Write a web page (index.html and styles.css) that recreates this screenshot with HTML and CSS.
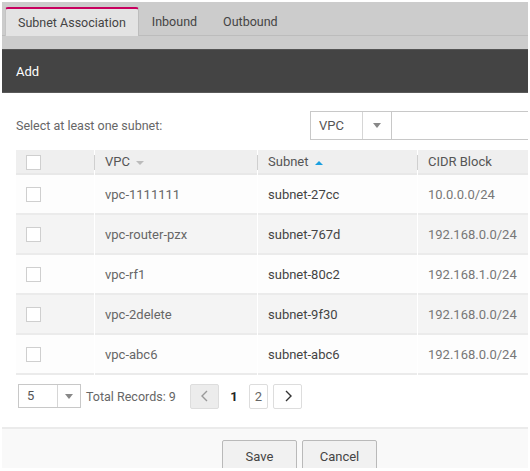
FILE: index.html
```html
<!DOCTYPE html>
<html lang="en">
<head>
    <meta charset="UTF-8">
    <title>Subnet Association</title>
    <link rel="stylesheet" href="styles.css">
</head>
<body>
    <div class="frame">
        <div class="tabbar">
            <ul class="tabs">
                <li class="tab active">Subnet Association</li>
                <li class="tab">Inbound</li>
                <li class="tab">Outbound</li>
            </ul>
        </div>
        <div class="titlebar">Add</div>

        <div class="content">
            <div class="toolbar">
                <span class="hint">Select at least one subnet:</span>
                <div class="filter">
                    <div class="select">
                        <span class="select-value">VPC</span>
                        <span class="select-arrow"><span class="caret"></span></span>
                    </div>
                    <input type="text" class="search">
                </div>
            </div>

            <table class="grid">
                <thead>
                    <tr>
                        <th class="col-check"><span class="check"></span></th>
                        <th class="col-vpc"><span class="sep"></span>VPC <span class="sort-down"></span></th>
                        <th class="col-subnet"><span class="sep"></span>Subnet <span class="sort-up"></span></th>
                        <th class="col-cidr"><span class="sep"></span>CIDR Block</th>
                    </tr>
                </thead>
                <tbody>
                    <tr>
                        <td><span class="check"></span></td>
                        <td>vpc-1111111</td>
                        <td class="sorted">subnet-27cc</td>
                        <td class="cidr">10.0.0.0/24</td>
                    </tr>
                    <tr class="alt">
                        <td><span class="check"></span></td>
                        <td>vpc-router-pzx</td>
                        <td class="sorted">subnet-767d</td>
                        <td class="cidr">192.168.0.0/24</td>
                    </tr>
                    <tr>
                        <td><span class="check"></span></td>
                        <td>vpc-rf1</td>
                        <td class="sorted">subnet-80c2</td>
                        <td class="cidr">192.168.1.0/24</td>
                    </tr>
                    <tr class="alt">
                        <td><span class="check"></span></td>
                        <td>vpc-2delete</td>
                        <td class="sorted">subnet-9f30</td>
                        <td class="cidr">192.168.0.0/24</td>
                    </tr>
                    <tr>
                        <td><span class="check"></span></td>
                        <td>vpc-abc6</td>
                        <td class="sorted">subnet-abc6</td>
                        <td class="cidr">192.168.0.0/24</td>
                    </tr>
                </tbody>
            </table>

            <div class="pager">
                <div class="select small">
                    <span class="select-value">5</span>
                    <span class="select-arrow"><span class="caret"></span></span>
                </div>
                <span class="total">Total Records: 9</span>
                <div class="pages">
                    <span class="page-btn disabled">
                        <svg width="10" height="12" viewBox="0 0 10 12"><path d="M7 1 L2 6 L7 11" fill="none" stroke="#999" stroke-width="1.4"/></svg>
                    </span>
                    <span class="page current">1</span>
                    <span class="page boxed">2</span>
                    <span class="page-btn">
                        <svg width="10" height="12" viewBox="0 0 10 12"><path d="M3 1 L8 6 L3 11" fill="none" stroke="#333" stroke-width="1.4"/></svg>
                    </span>
                </div>
            </div>
        </div>

        <div class="footer">
            <button class="btn">Save</button>
            <button class="btn">Cancel</button>
        </div>
    </div>
</body>
</html>
```

FILE: styles.css
```css
body {
    margin: 0;
    padding: 2px;
    background-color: white;
    font-family: Roboto, "Liberation Sans", sans-serif;
    font-size: 13px;
    color: #555;
}

.frame {
    width: 526px;
    height: 466px;
    overflow: hidden;
}

/* Tabs */
.tabbar {
    height: 47px;
    background-color: #cccccc;
    padding-top: 5px;
    box-sizing: border-box;
}

.tabs {
    list-style: none;
    margin: 0;
    padding: 0 0 0 3px;
    display: flex;
    height: 28px;
    border-bottom: 1px solid #bcbcbc;
    font-size: 12.5px;
}

.tab {
    padding: 0 13px;
    line-height: 29px;
    color: #444;
}

.tab.active {
    background-color: #e3e3e3;
    border-top: 2px solid #c8005f;
    border-left: 1px solid #c4c4c4;
    border-right: 1px solid #bdbdbd;
    border-radius: 3px 3px 0 0;
    line-height: 27px;
    padding: 0 12px;
    margin-bottom: -1px;
    height: 27px;
}

.titlebar {
    height: 44px;
    line-height: 44px;
    background-color: #444444;
    border-top: 1px solid #555;
    border-bottom: 1px solid #5a5a5a;
    box-sizing: border-box;
    color: white;
    padding-left: 14px;
}

/* Content */
.content {
    padding: 18px 0 0 14px;
}

.toolbar {
    display: flex;
    align-items: center;
    height: 29px;
}

.hint {
    flex: none;
    width: 294px;
    color: #666;
    font-size: 12.5px;
}

.filter {
    display: flex;
    flex: none;
}

.select {
    display: flex;
    height: 29px;
    border: 1px solid #c8c8c8;
    box-sizing: border-box;
    background-color: white;
}

.select-value {
    width: 43px;
    padding-left: 8px;
    line-height: 27px;
    color: #555;
    border-right: 1px solid #d6d6d6;
}

.select-arrow {
    width: 28px;
    display: flex;
    align-items: center;
    justify-content: center;
}

.caret {
    width: 0;
    height: 0;
    border-left: 4px solid transparent;
    border-right: 4px solid transparent;
    border-top: 5px solid #888;
}

.search {
    width: 170px;
    height: 29px;
    box-sizing: border-box;
    border: 1px solid #c8c8c8;
    border-left: none;
    margin: 0;
}

/* Table */
.grid {
    margin-top: 10px;
    border-collapse: separate;
    border-spacing: 1px 0;
    margin-left: -1px;
    width: 560px;
    table-layout: fixed;
}

.grid th {
    height: 23px;
    background-color: #efefef;
    font-weight: normal;
    text-align: left;
    color: #555;
    position: relative;
    padding: 0 0 0 10px;
    border-bottom: 2px solid #e8e8e8;
}

.grid td {
    height: 38px;
    padding: 0 0 0 10px;
    color: #666;
    background-color: #fdfdfd;
    border-bottom: 2px solid #ebebeb;
}

.grid tr.alt td {
    background-color: #f4f4f4;
}

.grid td.sorted {
    color: #444;
}

.grid td.cidr {
    color: #777;
}

.col-check { width: 68px; }
.col-vpc { width: 152px; }
.col-subnet { width: 149px; }
.col-cidr { width: 150px; }

.sep {
    position: absolute;
    left: -1px;
    top: 5px;
    height: 15px;
    border-left: 1px solid #cfcfcf;
}

.check {
    display: inline-block;
    width: 13px;
    height: 13px;
    border: 1px solid #cfcfcf;
    background-color: white;
    vertical-align: middle;
}

.sort-down,
.sort-up {
    display: inline-block;
    width: 0;
    height: 0;
    border-left: 4px solid transparent;
    border-right: 4px solid transparent;
    vertical-align: middle;
    margin-left: 3px;
}

.sort-down {
    border-top: 4px solid #bbb;
}

.sort-up {
    border-bottom: 4px solid #1a9fe0;
}

/* Pagination */
.pager {
    display: flex;
    align-items: center;
    height: 24px;
    margin-top: 9px;
    padding-left: 2px;
}

.select.small {
    height: 24px;
    width: 63px;
}

.select.small .select-value {
    width: 31px;
    line-height: 22px;
}

.select.small .select-arrow {
    width: 23px;
}

.total {
    margin-left: 5px;
    color: #666;
    font-size: 12.5px;
}

.pages {
    display: flex;
    align-items: center;
    margin-left: auto;
    margin-right: 226px;
    gap: 5px;
}

.page-btn {
    width: 27px;
    height: 23px;
    border: 1px solid #ddd;
    border-radius: 2px;
    display: flex;
    align-items: center;
    justify-content: center;
    background-color: white;
}

.page-btn.disabled {
    background-color: #ececec;
}

.page {
    height: 23px;
    line-height: 23px;
    text-align: center;
    color: #666;
}

.page.current {
    width: 20px;
    color: #222;
    font-weight: bold;
}

.page.boxed {
    width: 17px;
    border: 1px solid #ddd;
    border-radius: 2px;
}

/* Footer */
.footer {
    margin-top: 19px;
    height: 42px;
    background-color: #f9f9f9;
    border-top: 2px solid #ebebeb;
    display: flex;
    gap: 5px;
    padding: 11px 0 0 220px;
    box-sizing: border-box;
    overflow: hidden;
}

.btn {
    width: 75px;
    height: 32px;
    flex: none;
    border: 1px solid #b9b9b9;
    border-radius: 2px;
    background-color: #f1f1f1;
    font-family: Roboto, "Liberation Sans", sans-serif;
    font-size: 13px;
    color: #444;
    cursor: pointer;
}
```
